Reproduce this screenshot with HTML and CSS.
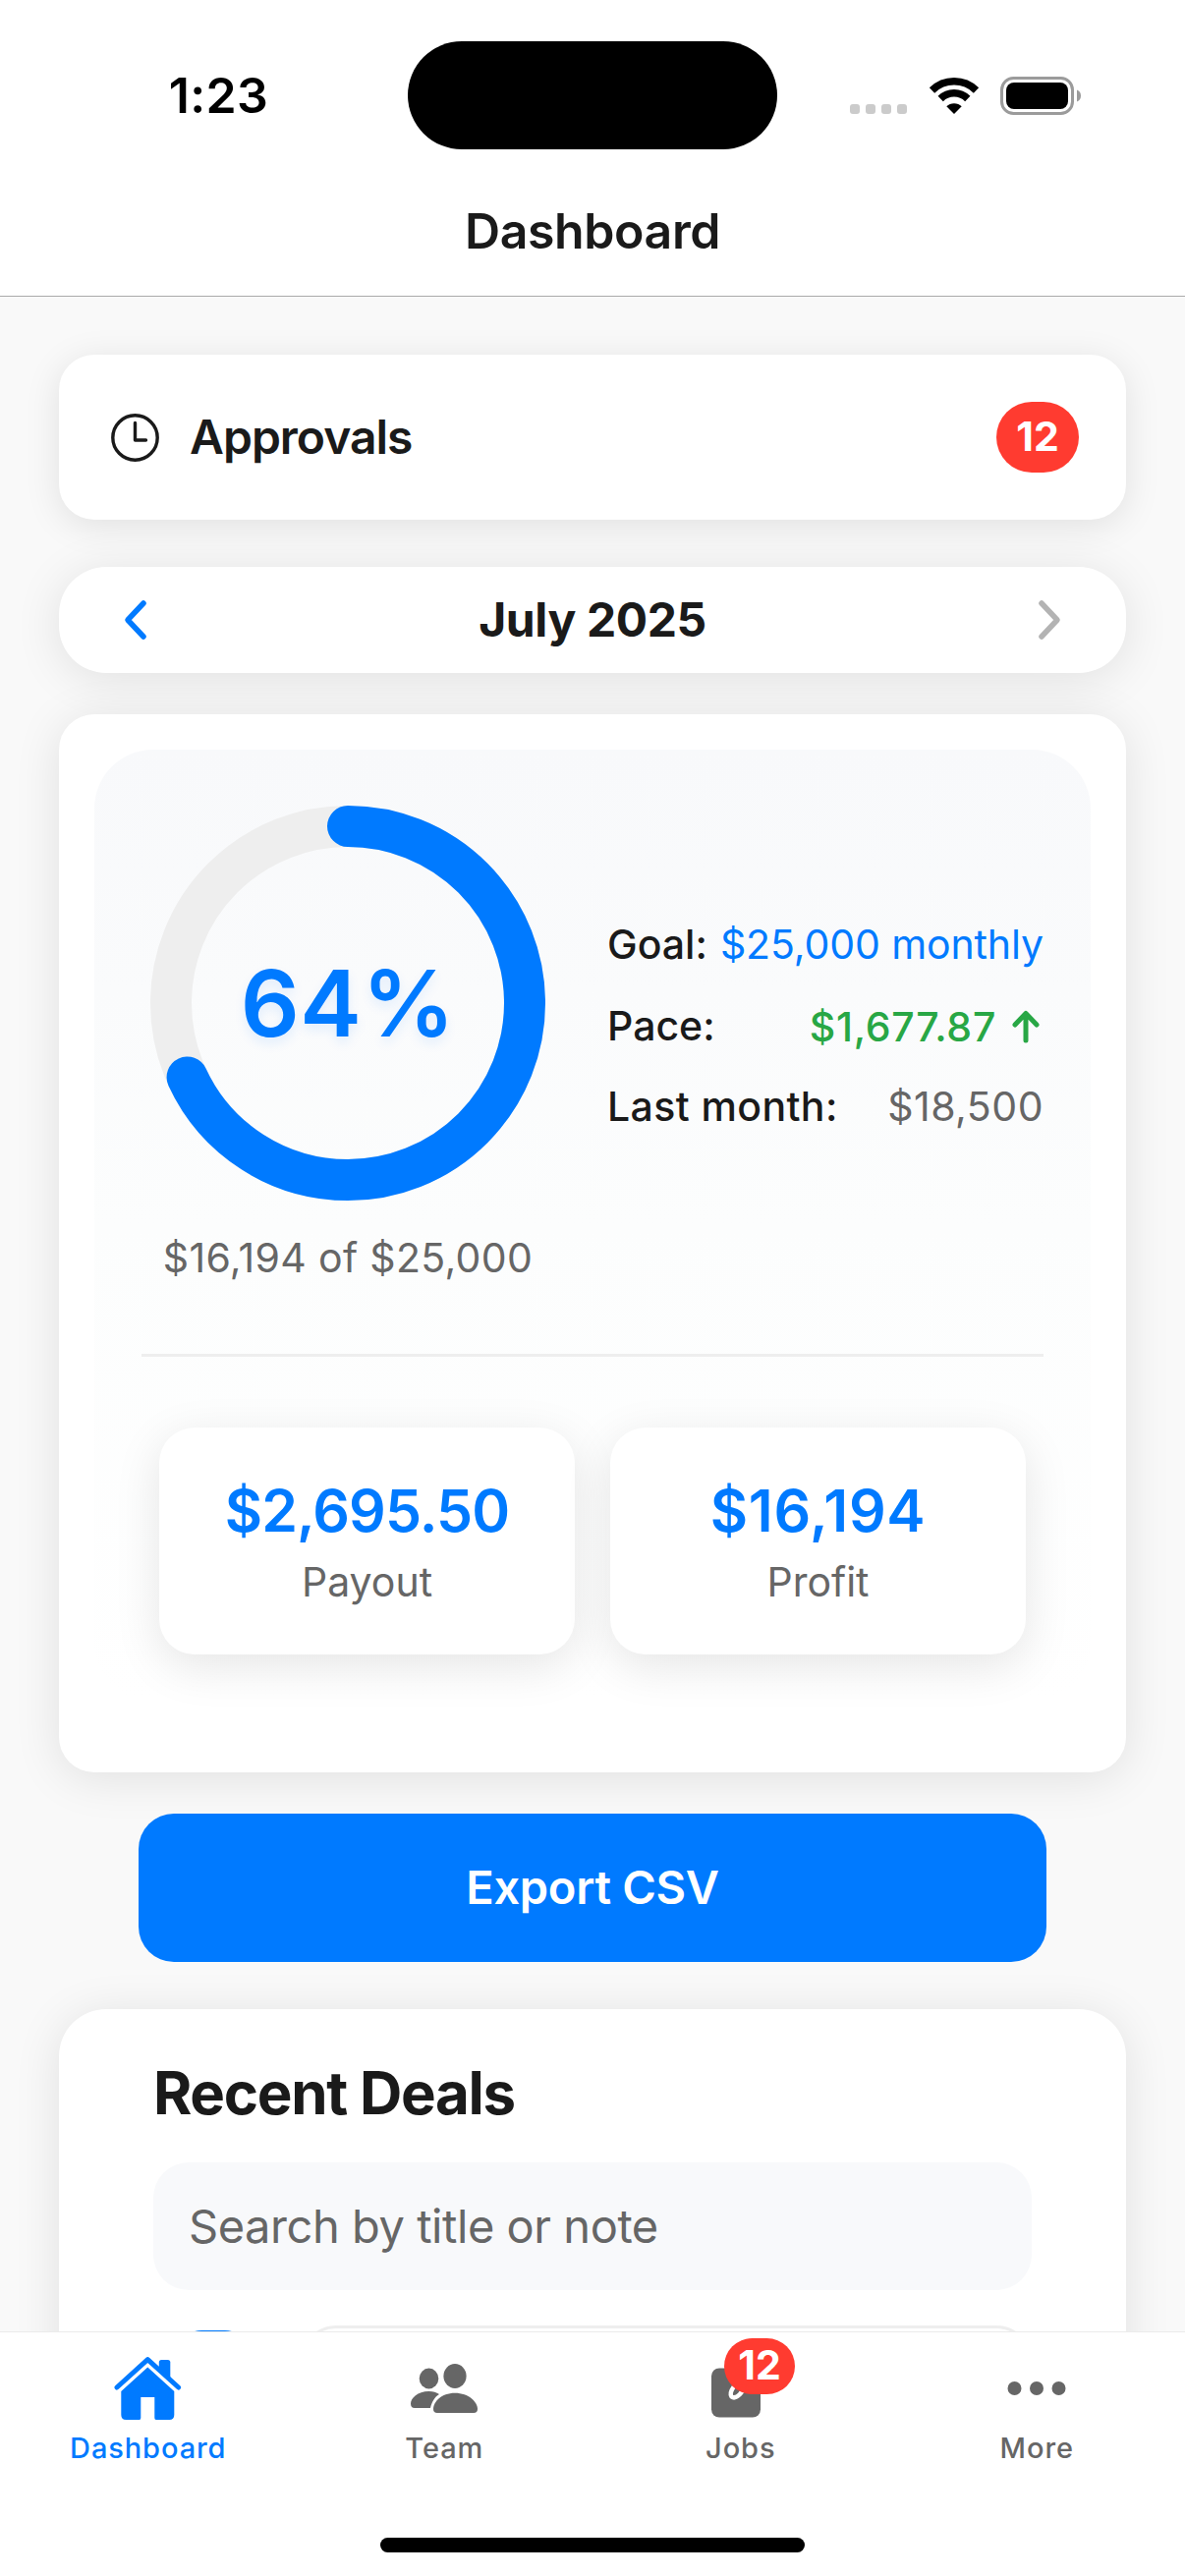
FILE: index.html
```html
<!DOCTYPE html>
<html lang="en">
<head>
  <meta charset="UTF-8">
  <meta name="viewport" content="width=device-width, initial-scale=1.0">
  <title>Dashboard</title>
  <link rel="stylesheet" href="styles.css">
</head>
<body>
  <header class="header">
    <div class="status-bar">
      <div class="time">1:23</div>
      <div class="island"></div>
      <div class="status-icons">
        <svg width="58" height="40" viewBox="0 0 58 40" fill="#cbcbcb">
          <rect x="0" y="29" width="10" height="10" rx="3"/>
          <rect x="16" y="29" width="10" height="10" rx="3"/>
          <rect x="32" y="29" width="10" height="10" rx="3"/>
          <rect x="48" y="29" width="10" height="10" rx="3"/>
        </svg>
        <svg class="wifi" width="52" height="40" viewBox="0 0 52 40">
          <g fill="none" stroke="#000" stroke-width="7.500">
            <path d="M3.500 15 A32 32 0 0 1 48.500 15"/>
            <path d="M12.200 23.500 A19.500 19.500 0 0 1 39.800 23.500"/>
          </g>
          <path d="M26 39 L18.300 31.300 A11 11 0 0 1 33.700 31.300 Z"/>
        </svg>
        <svg class="battery" width="83" height="40" viewBox="0 0 83 40">
          <rect x="1.500" y="2.500" width="72" height="36" rx="12" fill="none" stroke="#9b9b9b" stroke-width="3"/>
          <rect x="6" y="7" width="63" height="27" rx="8"/>
          <path d="M78 14.500 a6.500 6.500 0 0 1 0 12 Z" fill="#9b9b9b"/>
        </svg>
      </div>
    </div>
    <h1 class="title">Dashboard</h1>
  </header>

  <main class="content">
    <section class="card approvals">
      <svg width="49" height="49" viewBox="0 0 49 49" fill="none" stroke="#1a1a1a" stroke-linecap="round" stroke-linejoin="round">
        <circle cx="24.500" cy="24.500" r="22.700" stroke-width="3.400"/>
        <path d="M24.500 9.500 V27 H35.500" stroke-width="3.400"/>
      </svg>
      <span class="approvals-label">Approvals</span>
      <span class="badge">12</span>
    </section>

    <section class="card month">
      <svg width="24" height="42" viewBox="0 0 24 42" fill="none" stroke="#007aff" stroke-width="5.500" stroke-linecap="round" stroke-linejoin="round">
        <path d="M20 4 L4 21 L20 38"/>
      </svg>
      <span class="month-label">July 2025</span>
      <svg width="24" height="42" viewBox="0 0 24 42" fill="none" stroke="#b3b3b3" stroke-width="5.500" stroke-linecap="round" stroke-linejoin="round">
        <path d="M4 4 L20 21 L4 38"/>
      </svg>
    </section>

    <section class="card goal">
      <div class="goal-panel">
        <div class="goal-top">
          <div class="progress">
            <div class="ring">
              <svg width="402" height="402" viewBox="0 0 402 402" fill="none" stroke-width="42">
                <circle cx="201" cy="201" r="180" stroke="#eeeeee"/>
                <circle cx="201" cy="201" r="180" stroke="#007aff" stroke-linecap="round" stroke-dasharray="770 1131" transform="rotate(-90 201 201)"/>
              </svg>
              <span class="percent">64%</span>
            </div>
            <p class="progress-text">$16,194 of $25,000</p>
          </div>
          <div class="stats">
            <div class="stat"><span>Goal:</span><span class="value blue">$25,000 monthly</span></div>
            <div class="stat"><span>Pace:</span>
              <span class="value green">$1,677.87
                <svg width="28" height="34" viewBox="0 0 28 34" fill="none" stroke="#28a745" stroke-width="5" stroke-linecap="round" stroke-linejoin="round">
                  <path d="M14 31 V4 M3 15 L14 3.500 L25 15"/>
                </svg>
              </span>
            </div>
            <div class="stat"><span class="wide">Last month:</span><span class="value gray">$18,500</span></div>
          </div>
        </div>
        <div class="totals">
          <div class="total">
            <div class="amount payout">$2,695.50</div>
            <div class="total-label">Payout</div>
          </div>
          <div class="total">
            <div class="amount profit">$16,194</div>
            <div class="total-label">Profit</div>
          </div>
        </div>
      </div>
    </section>

    <button class="export">Export CSV</button>

    <section class="card deals">
      <h2>Recent Deals</h2>
      <input class="search" type="text" placeholder="Search by title or note">
      <div class="deal">
        <div class="deal-check"></div>
        <div class="deal-row"></div>
      </div>
    </section>
  </main>

  <nav class="tab-bar">
    <div class="tabs">
      <a class="tab active">
        <svg width="70" height="66" viewBox="0.700 0 70 66" fill="#007aff">
          <path d="M46.500 14 V6.500 q0 -2.500 2.500 -2.500 h6.500 q2.500 0 2.500 2.500 V24 L46.500 14 Z"/>
          <path d="M3.700 32 L35 3.700 L66.300 32" fill="none" stroke="#007aff" stroke-width="5" stroke-linecap="round" stroke-linejoin="round"/>
          <path d="M35 11.500 L62 36 V60 q0 5 -5 5 H43.500 Q42 65 42 63 V42 H28 V63 Q28 65 26.500 65 H13 q-5 0 -5 -5 V36 Z"/>
        </svg>
        <span>Dashboard</span>
      </a>
      <a class="tab">
        <svg width="70" height="66" viewBox="0 0 70 66" fill="#666">
          <ellipse cx="19.500" cy="23" rx="9.800" ry="10.400"/>
          <ellipse cx="46" cy="20.500" rx="11.600" ry="12.500"/>
          <path d="M1 48.500 C1 43 8 36 19.500 36 C24 36 27 37 30 39 C25 42 22.500 47 21 53 H5 Q1 53 1 48.500 Z"/>
          <path d="M24 54 C24 47 32 37.700 46 37.700 C60 37.700 69 47 69 54 Q69 58 65 58 H28 Q24 58 24 54 Z"/>
        </svg>
        <span>Team</span>
      </a>
      <a class="tab">
        <svg width="70" height="66" viewBox="0 0 70 66">
          <rect x="5" y="12.500" width="50" height="50" rx="8" fill="#666"/>
          <path d="M28 31 Q23 38 25.500 41.500 Q29 44 34 39 L42 29" fill="none" stroke="#fff" stroke-width="4.500"/>
        </svg>
        <span class="tab-badge">12</span>
        <span>Jobs</span>
      </a>
      <a class="tab">
        <svg width="70" height="66" viewBox="0 0 70 66" fill="#666">
          <circle cx="12.500" cy="33" r="7"/>
          <circle cx="35" cy="33" r="7"/>
          <circle cx="57.500" cy="33" r="7"/>
        </svg>
        <span>More</span>
      </a>
    </div>
    <div class="home-indicator"></div>
  </nav>
</body>
</html>
```
FILE: styles.css
```css
* {
  box-sizing: border-box;
}

body {
  margin: 0;
  height: 2622px;
  display: flex;
  flex-direction: column;
  overflow: hidden;
  background: #f9f9f9;
  color: #1a1a1a;
  font-family: Inter, "Liberation Sans", sans-serif;
}

svg {
  display: block;
  flex-shrink: 0;
}

/* header */
.header {
  flex: none;
  height: 302px;
  background: #fff;
  border-bottom: 1px solid #aaa;
}

.status-bar {
  height: 194px;
  display: grid;
  grid-template-columns: 415px 376px 415px;
  align-items: center;
}

.time {
  padding-left: 30px;
  text-align: center;
  font-size: 50px;
  font-weight: 600;
  letter-spacing: 0.4px;
  color: #000;
}

.island {
  height: 110px;
  border-radius: 55px;
  background: #000;
}

.status-icons {
  display: flex;
  padding-left: 74px;
}

.wifi {
  margin-left: 22px;
}

.battery {
  margin-left: 21px;
}

.title {
  margin: 0;
  text-align: center;
  font-size: 50px;
  line-height: 82px;
  font-weight: 600;
  letter-spacing: -0.4px;
}

/* content */
.content {
  flex: 1;
  min-height: 0;
  overflow: hidden;
  padding: 59px 60px 0;
}

.card {
  background: #fff;
  border-radius: 36px;
  box-shadow: 0 6px 48px rgba(0, 0, 0, 0.1);
}

.approvals {
  height: 168px;
  padding: 0 48px 0 53px;
  display: flex;
  align-items: center;
  box-shadow: 0 6px 36px rgba(0, 0, 0, 0.1);
}

.approvals-label {
  flex: 1;
  margin-left: 31px;
  padding-bottom: 2px;
  font-size: 48px;
  font-weight: 600;
  letter-spacing: -1px;
}

.badge {
  width: 84px;
  height: 72px;
  border-radius: 36px;
  background: #ff3b30;
  color: #fff;
  text-align: center;
  font-size: 41px;
  line-height: 71px;
  font-weight: 700;
}

.month {
  height: 108px;
  margin-top: 48px;
  padding: 0 66px;
  display: flex;
  align-items: center;
  justify-content: space-between;
  border-radius: 48px;
}

.month-label {
  padding-bottom: 1px;
  font-size: 48px;
  font-weight: 700;
  letter-spacing: -0.4px;
}

.goal {
  height: 1077px;
  margin-top: 42px;
  padding: 36px;
}

.goal-panel {
  height: 969px;
  padding: 57px 48px 0;
  border-radius: 60px;
  background: linear-gradient(#f8f9fb, #fcfdfd 50%, #fff);
}

.goal-top {
  height: 561px;
  display: flex;
  border-bottom: 3px solid #eee;
}

.progress {
  width: 420px;
}

.ring {
  width: 402px;
  margin-left: 9px;
  display: grid;
  place-items: center;
}

.ring svg,
.percent {
  grid-area: 1 / 1;
}

.percent {
  padding-bottom: 1px;
  font-size: 94px;
  font-weight: 600;
  color: #007aff;
  letter-spacing: 0.5px;
  text-shadow: 0 6px 12px rgba(0, 122, 255, 0.1);
}

.progress-text {
  margin: 33px 0 0;
  text-align: center;
  white-space: nowrap;
  font-size: 41px;
  line-height: 50px;
  letter-spacing: 0.35px;
  color: #666;
}

.stats {
  flex: 1;
  margin-left: 54px;
  padding-top: 100px;
  font-size: 41px;
  font-weight: 500;
}

.stat {
  height: 82.5px;
  display: flex;
  align-items: center;
  justify-content: space-between;
  white-space: nowrap;
}

.wide {
  letter-spacing: 0.4px;
}

.value {
  font-weight: 400;
}

.blue {
  color: #007aff;
  letter-spacing: -0.1px;
}

.green {
  display: flex;
  align-items: center;
  gap: 16px;
  margin-right: 4px;
  padding-top: 2px;
  font-weight: 500;
  letter-spacing: 0.7px;
  color: #28a745;
}

.gray {
  color: #666;
  letter-spacing: 0.5px;
}

.totals {
  display: grid;
  grid-template-columns: 1fr 1fr;
  gap: 36px;
  padding: 72px 18px 0;
}

.total {
  height: 231px;
  padding-top: 47px;
  text-align: center;
  background: #fff;
  border-radius: 36px;
  box-shadow: 0 12px 48px rgba(0, 0, 0, 0.1);
}

.amount {
  font-size: 59px;
  line-height: 76px;
  font-weight: 600;
  color: #007aff;
}

.payout {
  letter-spacing: -0.9px;
}

.profit {
  letter-spacing: 0.7px;
}

.total-label {
  font-size: 41px;
  line-height: 68px;
  color: #666;
}

.export {
  display: block;
  width: 924px;
  height: 151px;
  margin: 42px auto 48px;
  padding: 0 0 3px;
  border: none;
  border-radius: 36px;
  background: #007aff;
  color: #fff;
  font-family: inherit;
  font-size: 47px;
  font-weight: 600;
  letter-spacing: -0.3px;
}

.deals {
  height: 600px;
  padding: 48px 96px;
  border-radius: 48px;
}

.deals h2 {
  margin: 0;
  font-size: 60px;
  line-height: 74px;
  font-weight: 700;
  letter-spacing: -1.3px;
}

.search {
  display: block;
  width: 894px;
  height: 130px;
  margin-top: 34px;
  padding: 0 36px 2px;
  border: none;
  border-radius: 36px;
  background: #f8f9fb;
  font-family: inherit;
  font-size: 47px;
  letter-spacing: -0.45px;
}

.search::placeholder {
  color: #666;
}

.deal {
  display: flex;
  margin-top: 36px;
}

.deal-check {
  width: 72px;
  height: 72px;
  margin: 5px 0 0 25px;
  border-radius: 24px;
  background: #007aff;
}

.deal-row {
  width: 744px;
  height: 180px;
  margin-left: 53px;
  border: 3px solid #eee;
  border-radius: 36px;
}

/* tab bar */
.tab-bar {
  flex: none;
  height: 249px;
  background: #fff;
  border-top: 1px solid #ebebeb;
}

.tabs {
  height: 209px;
  display: grid;
  grid-template-columns: repeat(4, 1fr);
}

.tab {
  position: relative;
  padding-top: 24px;
  display: flex;
  flex-direction: column;
  align-items: center;
  font-size: 29px;
  line-height: 56px;
  font-weight: 500;
  letter-spacing: 0.9px;
  color: #666;
}

.tab.active {
  color: #007aff;
}

.tab-badge {
  position: absolute;
  top: 6px;
  left: 134px;
  width: 72px;
  height: 57px;
  border-radius: 28.5px;
  background: #ff3b30;
  color: #fff;
  text-align: center;
  font-size: 41px;
  line-height: 55px;
  font-weight: 700;
  letter-spacing: 0;
}

.home-indicator {
  width: 432px;
  height: 15px;
  margin: 0 auto;
  border-radius: 8px;
  background: #000;
}
```
